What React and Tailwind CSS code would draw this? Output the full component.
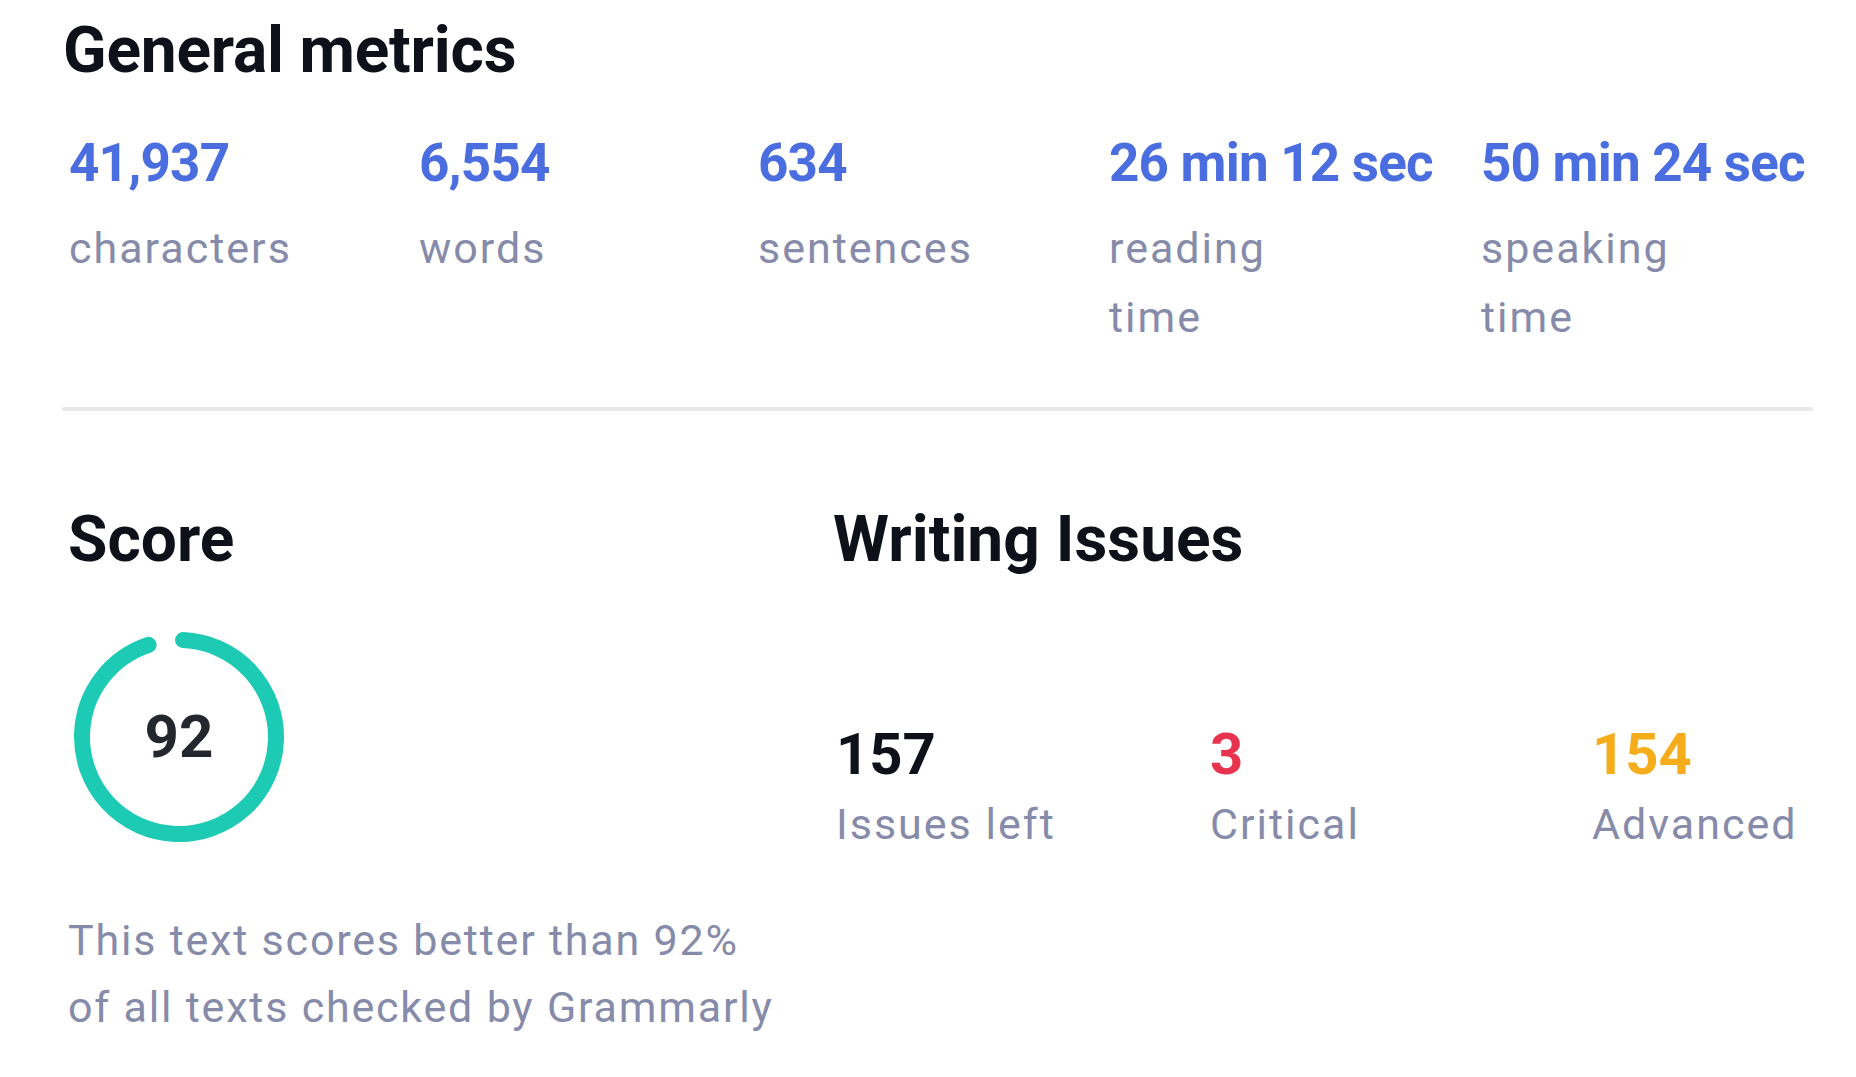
const metrics = [
  { value: "41,937", label: ["characters"], width: "w-[350px]" },
  { value: "6,554", label: ["words"], width: "w-[339px]" },
  { value: "634", label: ["sentences"], width: "w-[351px]" },
  { value: "26 min 12 sec", label: ["reading", "time"], width: "w-[372px]" },
  { value: "50 min 24 sec", label: ["speaking", "time"], width: "" },
];

const issues = [
  { value: "157", label: "Issues left", color: "text-[#0e101a]", width: "w-[374px]" },
  { value: "3", label: "Critical", color: "text-[#e8334f]", width: "w-[382px]" },
  { value: "154", label: "Advanced", color: "text-[#f6ad1b]", width: "" },
];

function ScoreRing({ score }) {
  const r = 97;
  const c = 2 * Math.PI * r;
  // ring is drawn a bit longer than the score so the gap matches the visual
  const arc = c * 0.941;
  return (
    <div className="relative h-[210px] w-[210px]">
      <svg width="210" height="210" viewBox="0 0 210 210">
        <circle
          cx="105"
          cy="105"
          r={r}
          fill="none"
          stroke="#1dcbb4"
          strokeWidth="16"
          strokeLinecap="round"
          strokeDasharray={`${arc} ${c}`}
          transform="rotate(-87.6 105 105)"
        />
      </svg>
      <div className="absolute inset-0 flex items-center justify-center text-[60px] font-bold leading-none text-[#25272e]">
        {score}
      </div>
    </div>
  );
}

export default function App() {
  return (
    <div className="min-h-screen bg-white pl-[62px] font-['Roboto',sans-serif]">
      <h1 className="pt-[19px] pl-[1px] text-[64px] font-bold leading-none tracking-[-0.2px] text-[#0e101a]">
        General metrics
      </h1>

      <div className="mt-[54px] flex pl-[7px]">
        {metrics.map((m) => (
          <div key={m.value} className={`shrink-0 ${m.width}`}>
            <div className="text-[53px] font-bold leading-none tracking-[-0.8px] text-[#4a6ddf]">
              {m.value}
            </div>
            <div className="mt-[24px] text-[43px] leading-[69px] tracking-[2px] text-[#878baa]">
              {m.label.map((l) => (
                <div key={l}>{l}</div>
              ))}
            </div>
          </div>
        ))}
      </div>

      <div className="mt-[55px] h-[4px] w-[1751px] rounded-full bg-[#e7e7ec]" />

      <div className="flex">
        <div className="w-[771px] shrink-0">
          <h2 className="mt-[97px] pl-[6px] text-[64px] font-bold leading-none text-[#0e101a]">Score</h2>
          <div className="mt-[60px] ml-[12px]">
            <ScoreRing score={92} />
          </div>
          <p className="mt-[65px] pl-[6px] text-[43px] leading-[67px] tracking-[1.8px] text-[#878baa]">
            This text scores better than 92%
            <br />
            of all texts checked by Grammarly
          </p>
        </div>

        <div className="flex-1">
          <h2 className="mt-[97px] text-[64px] font-bold leading-none text-[#0e101a]">Writing Issues</h2>
          <div className="mt-[153px] flex pl-[3px]">
            {issues.map((i) => (
              <div key={i.label} className={`shrink-0 ${i.width}`}>
                <div className={`text-[58px] font-bold leading-none ${i.color}`}>{i.value}</div>
                <div className="mt-[17px] text-[43px] leading-[48px] tracking-[2px] text-[#878baa]">
                  {i.label}
                </div>
              </div>
            ))}
          </div>
        </div>
      </div>
    </div>
  );
}
